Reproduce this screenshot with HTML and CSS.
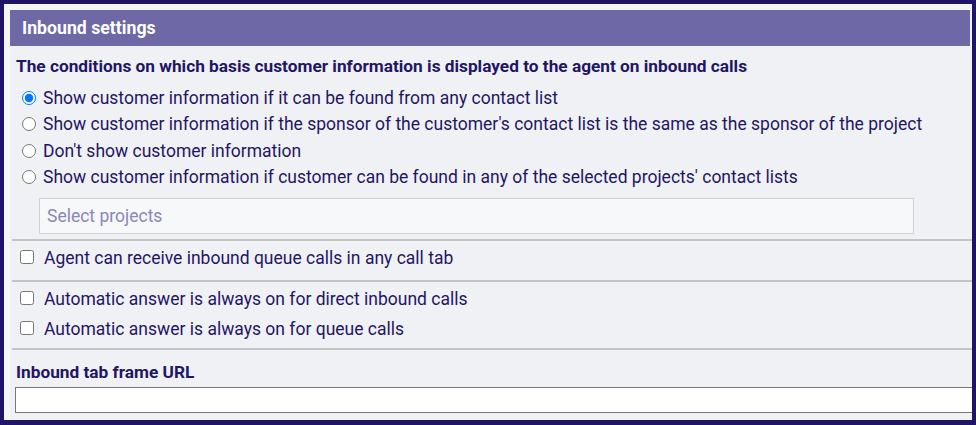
FILE: index.html
```html
<!DOCTYPE html>
<html>
<head>
<meta charset="utf-8">
<link rel="stylesheet" href="styles.css">
</head>
<body>
<div class="frame">
  <div class="panel">
    <div class="panel-header">Inbound settings</div>
    <div class="panel-body">
      <div class="section section-first">
        <div class="section-title">The conditions on which basis customer information is displayed to the agent on inbound calls</div>
        <div class="radio-list">
          <label class="radio-row"><input type="radio" name="show" checked><span>Show customer information if it can be found from any contact list</span></label>
          <label class="radio-row"><input type="radio" name="show"><span>Show customer information if the sponsor of the customer's contact list is the same as the sponsor of the project</span></label>
          <label class="radio-row"><input type="radio" name="show"><span>Don't show customer information</span></label>
          <label class="radio-row"><input type="radio" name="show"><span>Show customer information if customer can be found in any of the selected projects' contact lists</span></label>
        </div>
        <div class="select-box">Select projects</div>
      </div>
      <div class="section section-agent">
        <label class="check-row"><input type="checkbox"><span>Agent can receive inbound queue calls in any call tab</span></label>
      </div>
      <div class="section section-auto">
        <label class="check-row"><input type="checkbox"><span>Automatic answer is always on for direct inbound calls</span></label>
        <label class="check-row check-row-second"><input type="checkbox"><span>Automatic answer is always on for queue calls</span></label>
      </div>
      <div class="section section-url">
        <div class="field-title">Inbound tab frame URL</div>
        <input class="url-input" type="text">
      </div>
    </div>
  </div>
</div>
</body>
</html>
```
FILE: styles.css
```css
html, body {
  margin: 0;
  padding: 0;
}
body {
  background: #1f1466;
  font-family: Roboto, "Noto Sans", sans-serif;
  color: #1f1664;
  font-size: 17.5px;
  line-height: 20px;
}
.frame {
  margin: 4px;
  width: 968px;
  height: 416px;
  background: #f6f6f9;
  padding-top: 6px;
  box-sizing: border-box;
  overflow: hidden;
}
.panel {
  margin-left: 6px;
  width: 962px;
  height: 100%;
  background: #f0f1f5;
}
.panel-header {
  margin-right: 2px;
  height: 36px;
  line-height: 36px;
  background: #6e68a6;
  color: #ffffff;
  font-weight: bold;
  font-size: 17.7px;
  padding-left: 12px;
}
.panel-body {
  padding-left: 2px;
}
.section {
  border-top: 2px solid #c4c4c6;
}
.section-first {
  border-top: none;
  padding-top: 10px;
  padding-bottom: 5px;
}
.section-title {
  font-weight: bold;
  font-size: 17.25px;
  padding-left: 4px;
}
.radio-list {
  margin-top: 9px;
  display: flex;
  flex-direction: column;
}
.radio-row {
  display: flex;
  align-items: center;
  height: 26.3px;
}
.radio-row input {
  margin: 0 7px 0 10px;
  width: 14px;
  height: 14px;
}
.select-box {
  margin-top: 8px;
  margin-left: 27px;
  width: 875px;
  height: 36px;
  box-sizing: border-box;
  border: 1px solid #cfd0d4;
  background: #f7f8fa;
  color: #8c86b9;
  padding-left: 7px;
  line-height: 34px;
}
.check-row {
  display: flex;
  align-items: center;
}
.check-row input {
  margin: 0 10px 3px 8px;
  width: 14px;
  height: 14px;
}
.section-agent {
  padding-top: 7px;
  padding-bottom: 12px;
}
.section-auto {
  padding-top: 7px;
  padding-bottom: 9px;
}
.check-row-second {
  margin-top: 10px;
}
.section-url {
  padding-top: 12px;
}
.field-title {
  font-weight: bold;
  font-size: 17.25px;
  padding-left: 4px;
}
.url-input {
  display: block;
  margin: 5px 0 0 3px;
  width: 1000px;
  height: 26px;
  box-sizing: border-box;
  border: 1px solid #767676;
  background: #ffffff;
  padding: 0;
}
```
